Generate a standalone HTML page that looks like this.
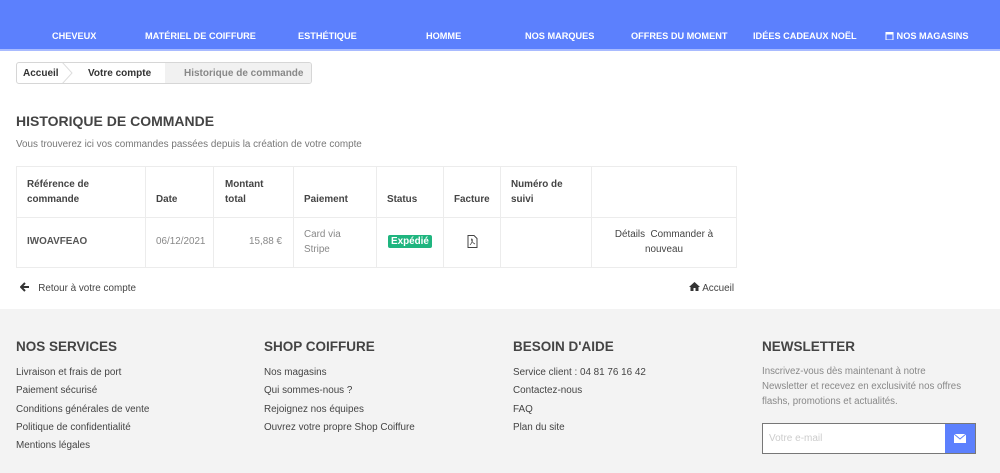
<!DOCTYPE html>
<html><head><meta charset="utf-8"><style>
*{margin:0;padding:0;box-sizing:border-box}
body{width:1000px;height:473px;overflow:hidden;font-family:"Liberation Sans",Arial,sans-serif;background:#fff;color:#333;position:relative}
.nav{position:absolute;left:0;top:0;width:1000px;height:51px;background:#5c80fd;border-bottom:2px solid #a9bbff}
.nav span{position:absolute;top:31px;color:#fff;font-size:9.2px;font-weight:bold;white-space:nowrap}
.bc{position:absolute;left:16px;top:62px;width:296px;height:22px;border:1px solid #d6d6d6;border-radius:3px;font-size:10px;font-weight:bold;background:#fff;overflow:hidden}
.bc span{position:absolute;top:5px}
.bc .last{position:absolute;left:148px;top:0;width:150px;height:20px;background:#f1f1f1}
h1{position:absolute;left:16px;top:113px;font-size:14px;font-weight:bold;color:#444}
.sub{position:absolute;left:16px;top:139px;font-size:9.9px;color:#777}
.t{position:absolute;left:16px;top:166px;width:721px;height:102px;border:1px solid #ececec}
.vl{position:absolute;top:0;width:1px;height:100px;background:#ececec}
.hl{position:absolute;left:0;top:50px;width:719px;height:1px;background:#ececec}
.c{position:absolute;font-size:9.9px;line-height:15px}
.h{font-weight:bold;color:#444}
.g{color:#888}
.badge{position:absolute;left:371px;top:68px;background:#1fb57f;color:#fff;font-size:9.9px;font-weight:bold;padding:1px 3px;border-radius:2px}
.foot{position:absolute;left:0;top:309px;width:1000px;height:164px;background:#f3f3f3}
.foot h3{position:absolute;top:30px;font-size:13.5px;font-weight:bold;color:#444}
.foot .l{position:absolute;font-size:9.9px;color:#444;line-height:18.3px;top:55px}
.nl{position:absolute;left:762px;top:55px;font-size:9.7px;color:#888;line-height:15px;white-space:nowrap}
.inp{position:absolute;left:762px;top:114px;width:214px;height:31px;border:1px solid #777;background:#fff}
.inp span{position:absolute;left:6px;top:9px;font-size:10px;color:#ccc}
.inp .b{position:absolute;right:0;top:0;width:30px;height:29px;background:#5c80fd}
</style></head><body>
<div class="nav">
<span style="left:52px">CHEVEUX</span>
<span style="left:145px">MATÉRIEL DE COIFFURE</span>
<span style="left:298px">ESTHÉTIQUE</span>
<span style="left:426px">HOMME</span>
<span style="left:525px">NOS MARQUES</span>
<span style="left:631px">OFFRES DU MOMENT</span>
<span style="left:753px">IDÉES CADEAUX NOËL</span>
<span style="left:885px"><svg width="9" height="9" viewBox="0 0 9 9" style="vertical-align:-1px"><rect x="1" y="3" width="7" height="6" fill="none" stroke="#fff"/><rect x="0.5" y="1" width="8" height="2.5" fill="#fff"/></svg> NOS MAGASINS</span>
</div>
<div class="bc">
<span style="left:6px;color:#333">Accueil</span>
<svg style="position:absolute;left:45px;top:-1px" width="12" height="22"><path d="M0 0 L10 11 L0 22" fill="none" stroke="#ddd"/></svg>
<span style="left:71px;color:#333">Votre compte</span>
<div class="last"></div>
<span style="left:167px;color:#888">Historique de commande</span>
</div>
<h1>HISTORIQUE DE COMMANDE</h1>
<div class="sub">Vous trouverez ici vos commandes passées depuis la création de votre compte</div>
<div class="t">
<div class="vl" style="left:128px"></div><div class="vl" style="left:196px"></div><div class="vl" style="left:276px"></div><div class="vl" style="left:359px"></div><div class="vl" style="left:426px"></div><div class="vl" style="left:483px"></div><div class="vl" style="left:574px"></div>
<div class="hl"></div>
<div class="c h" style="left:10px;top:10px">Référence de<br>commande</div>
<div class="c h" style="left:139px;top:25px">Date</div>
<div class="c h" style="left:208px;top:10px">Montant<br>total</div>
<div class="c h" style="left:287px;top:25px">Paiement</div>
<div class="c h" style="left:370px;top:25px">Status</div>
<div class="c h" style="left:437px;top:25px">Facture</div>
<div class="c h" style="left:494px;top:10px">Numéro de<br>suivi</div>
<div class="c h" style="left:10px;top:67px;color:#555">IWOAVFEAO</div>
<div class="c g" style="left:139px;top:67px">06/12/2021</div>
<div class="c g" style="left:232px;top:67px">15,88 €</div>
<div class="c g" style="left:287px;top:60px">Card via<br>Stripe</div>
<div class="badge">Expédié</div>
<svg style="position:absolute;left:450px;top:68px" width="11" height="13" viewBox="0 0 11 13"><path d="M1 .5h6l3 3v9H1z" fill="none" stroke="#444"/><path d="M3 10c2-2 3-5 2-6s-1 3 3 5" fill="none" stroke="#444" stroke-width=".7"/></svg>
<div class="c" style="left:574px;top:60px;width:146px;text-align:center;color:#444">Détails &nbsp;Commander à<br>nouveau</div>
</div>
<div class="c" style="left:20px;top:281px;color:#444"><svg width="10" height="10" viewBox="0 0 10 10" style="vertical-align:-1px"><path d="M5 1L1 5l4 4M1 5h8" fill="none" stroke="#333" stroke-width="2"/></svg>&nbsp;&nbsp; Retour à votre compte</div>
<div class="c" style="left:689px;top:281px;color:#444"><svg width="11" height="9" viewBox="0 0 11 9"><path d="M5.5 0L0 5h1.5v4h3V6h2v3h3V5H11z" fill="#333"/></svg> Accueil</div>
<div class="foot">
<h3 style="left:16px">NOS SERVICES</h3>
<h3 style="left:264px">SHOP COIFFURE</h3>
<h3 style="left:513px">BESOIN D'AIDE</h3>
<h3 style="left:762px">NEWSLETTER</h3>
<div class="l" style="left:16px">Livraison et frais de port<br>Paiement sécurisé<br>Conditions générales de vente<br>Politique de confidentialité<br>Mentions légales</div>
<div class="l" style="left:264px">Nos magasins<br>Qui sommes-nous ?<br>Rejoignez nos équipes<br>Ouvrez votre propre Shop Coiffure</div>
<div class="l" style="left:513px">Service client : 04 81 76 16 42<br>Contactez-nous<br>FAQ<br>Plan du site</div>
<div class="nl">Inscrivez-vous dès maintenant à notre<br>Newsletter et recevez en exclusivité nos offres<br>flashs, promotions et actualités.</div>
<div class="inp"><span>Votre e-mail</span><div class="b"><svg style="position:absolute;left:9px;top:10px" width="12" height="9" viewBox="0 0 12 9"><rect width="12" height="9" fill="#fff"/><path d="M0 0l6 5 6-5" fill="none" stroke="#5c80fd"/></svg></div></div>
</div>
</body></html>
